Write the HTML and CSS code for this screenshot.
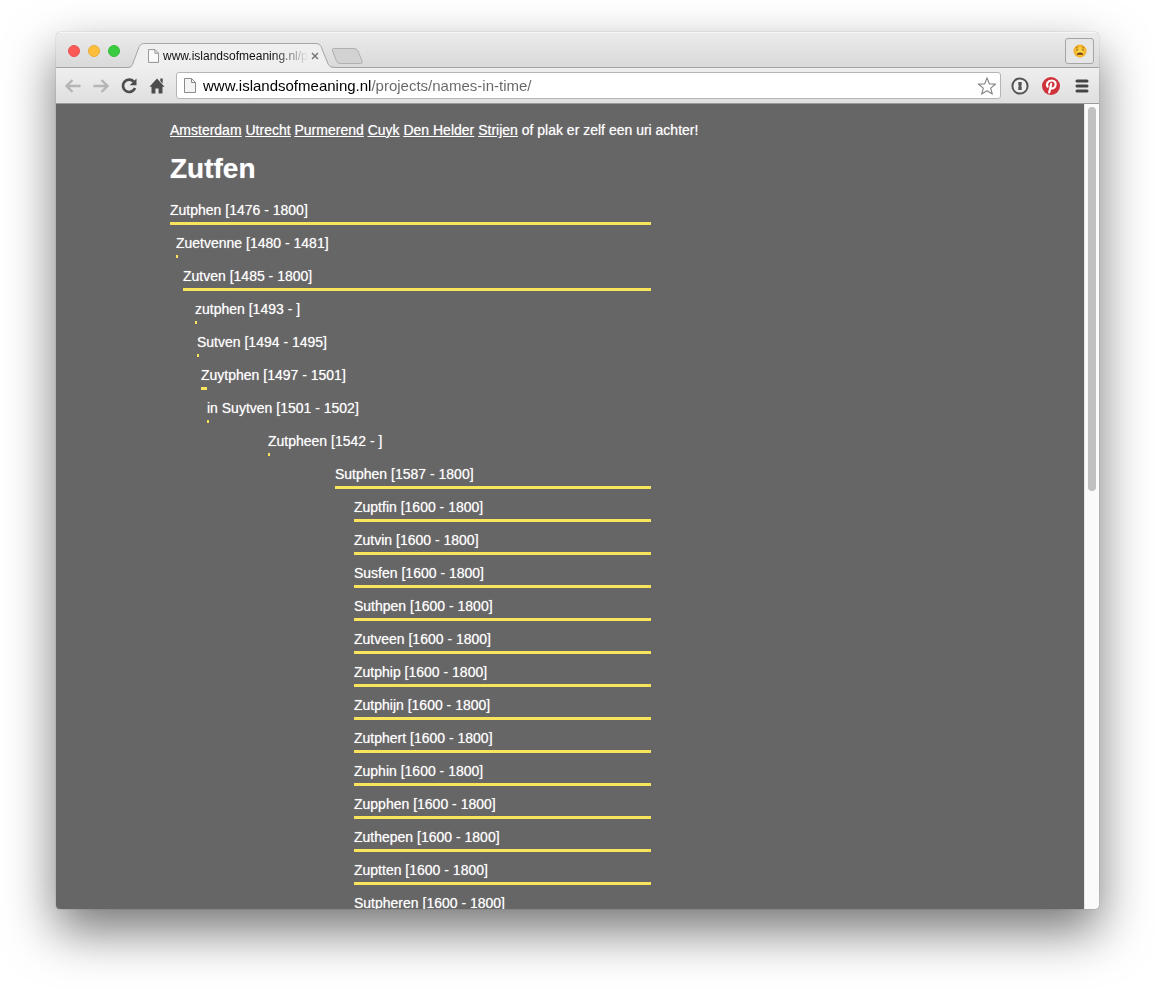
FILE: index.html
```html
<!DOCTYPE html>
<html lang="nl">
<head>
<meta charset="utf-8">
<title>Zutfen</title>
<link rel="stylesheet" href="styles.css">
</head>
<body>
<div class="window">
  <header class="tabstrip">
    <div class="lights">
      <button class="light close" aria-label="Close"></button>
      <button class="light minimise" aria-label="Minimise"></button>
      <button class="light expand" aria-label="Zoom"></button>
    </div>
    <div class="tab">
      <svg class="tab-shape" viewBox="0 0 210 26" preserveAspectRatio="none" aria-hidden="true"><path d="M0 25.500Q3.500 25.500 4.500 22.500L11.500 3.500Q13 .500 16 .500H191Q194.500.500 196 3.500L203.500 22.500Q205 25.500 210 25.500V26H0z" fill="#efefef"/><path d="M0 25.500Q3.500 25.500 4.500 22.500L11.500 3.500Q13 .500 16 .500H191Q194.500.500 196 3.500L203.500 22.500Q205 25.500 210 25.500" fill="none" stroke="#a2a2a2"/></svg>
      <svg class="page-icon small" viewBox="0 0 12 15" aria-hidden="true"><path d="M.500.500h7l4 4v10H.500z" fill="#fafafa" stroke="#8a8a8a"/><path d="M7.500.500v4h4" fill="none" stroke="#8a8a8a"/></svg>
      <span class="tab-title">www.islandsofmeaning.nl/p</span>
      <button class="tab-close" aria-label="Close tab"><svg viewBox="0 0 8 8"><path d="M1 1l6 6M7 1L1 7" stroke="#777" stroke-width="1.500"/></svg></button>
    </div>
    <button class="new-tab" aria-label="New tab"><svg viewBox="0 0 34 18"><path d="M3.500 1.500H24Q27 1.500 28 4L32 14Q33 16.500 30 16.500H10Q7.500 16.500 6.500 14L2.500 4Q1.500 1.500 3.500 1.500z" fill="#d2d2d2" stroke="#b0b0b0"/></svg></button>
    <button class="profile" aria-label="Profile"><svg viewBox="0 0 14 14"><defs><radialGradient id="face"><stop offset="0" stop-color="#ffe34f"/><stop offset="1" stop-color="#f3ac25"/></radialGradient></defs><circle cx="7" cy="7" r="6.500" fill="url(#face)"/><path d="M2.800 3.800L5 2.800M9 2.800l2.200 1M3.200 4.800l2 .9-2 .9M10.800 4.800l-2 .9 2 .9" fill="none" stroke="#8a5a20" stroke-width=".7"/><path d="M3.700 11Q4.200 8.600 7 8.600T10.300 11Q7 10 3.700 11z" fill="#63351a"/></svg></button>
  </header>
  <nav class="toolbar" aria-label="Browser">
    <button class="tool" aria-label="Back"><svg viewBox="0 0 18 18"><path d="M16.500 9H3M8.500 3L2.500 9l6 6" fill="none" stroke="#b5b5b5" stroke-width="2.400"/></svg></button>
    <button class="tool" aria-label="Forward"><svg viewBox="0 0 18 18"><path d="M1.500 9H15M9.500 3l6 6-6 6" fill="none" stroke="#b5b5b5" stroke-width="2.400"/></svg></button>
    <button class="tool" aria-label="Reload"><svg viewBox="0 0 18 18"><path d="M13.800 4.600A6.200 6.200 0 1 0 15 11" fill="none" stroke="#4d4d4d" stroke-width="2.700"/><path d="M16.500 1.500v6.800H9.700z" fill="#4d4d4d"/></svg></button>
    <button class="tool" aria-label="Home"><svg viewBox="0 0 18 18"><path d="M9 1.500l7.500 8.300H14.500V16.500H10.600V11.500H7.400v5H3.500V9.800H1.500zM12.300 1.500h2.400V6.500l-2.400-2.400z" fill="#4d4d4d"/></svg></button>
    <div class="address">
      <svg class="page-icon" viewBox="0 0 12 15" aria-hidden="true"><path d="M.500.500h7l4 4v10H.500z" fill="#f4f4f4" stroke="#8a8a8a"/><path d="M7.500.500v4h4" fill="none" stroke="#8a8a8a"/></svg>
      <input class="url" type="text" aria-label="Address" value="www.islandsofmeaning.nl/projects/names-in-time/">
      <button class="tool" aria-label="Bookmark"><svg viewBox="0 0 18 18"><path d="M9 .900l2.300 5.900 6.100.4-4.700 3.900 1.600 6L9 13.800l-5.300 3.300 1.600-6L.600 7.200l6.100-.4z" fill="#fff" stroke="#888" stroke-width="1.200" stroke-linejoin="round"/></svg></button>
    </div>
    <div class="extensions">
      <button class="tool" aria-label="Password manager"><svg viewBox="0 0 18 18"><circle cx="9" cy="9" r="7.600" fill="#eee" stroke="#555" stroke-width="2"/><path d="M7.300 5h3.400v3.300l-.7.800.7.700V13H7.300V9.700l.7-.8-.7-.7z" fill="#555"/></svg></button>
      <button class="tool" aria-label="Pinterest"><svg viewBox="0 0 18 18"><circle cx="9" cy="9" r="9" fill="#d0323c"/><path d="M5.600 9.600C4 7 5.800 3.500 9.500 3.500c3.200 0 4.800 2.300 4 5-.7 2.900-3.800 3.800-4.900 2M9.200 6.900L7.200 15.500" fill="none" stroke="#fff" stroke-width="2.200" stroke-linecap="round"/></svg></button>
      <button class="tool" aria-label="Menu"><svg viewBox="0 0 18 18"><path d="M4 4h10M4 9h10M4 14h10" stroke="#444" stroke-width="3" stroke-linecap="round"/></svg></button>
    </div>
  </nav>
  <div class="viewport">
    <main class="page">
      <div class="content">
        <p class="intro"><a href="#amsterdam">Amsterdam</a> <a href="#utrecht">Utrecht</a> <a href="#purmerend">Purmerend</a> <a href="#cuyk">Cuyk</a> <a href="#denhelder">Den Helder</a> <a href="#strijen">Strijen</a> of plak er zelf een uri achter!</p>
        <h1 class="place">Zutfen</h1>
        <ul class="names">
          <li class="name" style="margin-left:0px">Zutphen [1476 - 1800]<span class="span" style="width:481px"></span></li>
          <li class="name" style="margin-left:6px">Zuetvenne [1480 - 1481]<span class="span" style="width:2px"></span></li>
          <li class="name" style="margin-left:13px">Zutven [1485 - 1800]<span class="span" style="width:468px"></span></li>
          <li class="name" style="margin-left:25px">zutphen [1493 - ]<span class="span" style="width:2px"></span></li>
          <li class="name" style="margin-left:27px">Sutven [1494 - 1495]<span class="span" style="width:2px"></span></li>
          <li class="name" style="margin-left:31px">Zuytphen [1497 - 1501]<span class="span" style="width:6px"></span></li>
          <li class="name" style="margin-left:37px">in Suytven [1501 - 1502]<span class="span" style="width:2px"></span></li>
          <li class="name" style="margin-left:98px">Zutpheen [1542 - ]<span class="span" style="width:2px"></span></li>
          <li class="name" style="margin-left:165px">Sutphen [1587 - 1800]<span class="span" style="width:316px"></span></li>
          <li class="name" style="margin-left:184px">Zuptfin [1600 - 1800]<span class="span" style="width:297px"></span></li>
          <li class="name" style="margin-left:184px">Zutvin [1600 - 1800]<span class="span" style="width:297px"></span></li>
          <li class="name" style="margin-left:184px">Susfen [1600 - 1800]<span class="span" style="width:297px"></span></li>
          <li class="name" style="margin-left:184px">Suthpen [1600 - 1800]<span class="span" style="width:297px"></span></li>
          <li class="name" style="margin-left:184px">Zutveen [1600 - 1800]<span class="span" style="width:297px"></span></li>
          <li class="name" style="margin-left:184px">Zutphip [1600 - 1800]<span class="span" style="width:297px"></span></li>
          <li class="name" style="margin-left:184px">Zutphijn [1600 - 1800]<span class="span" style="width:297px"></span></li>
          <li class="name" style="margin-left:184px">Zutphert [1600 - 1800]<span class="span" style="width:297px"></span></li>
          <li class="name" style="margin-left:184px">Zuphin [1600 - 1800]<span class="span" style="width:297px"></span></li>
          <li class="name" style="margin-left:184px">Zupphen [1600 - 1800]<span class="span" style="width:297px"></span></li>
          <li class="name" style="margin-left:184px">Zuthepen [1600 - 1800]<span class="span" style="width:297px"></span></li>
          <li class="name" style="margin-left:184px">Zuptten [1600 - 1800]<span class="span" style="width:297px"></span></li>
          <li class="name" style="margin-left:184px">Sutpheren [1600 - 1800]<span class="span" style="width:297px"></span></li>
        </ul>
      </div>
    </main>
    <div class="scrollbar"><div class="thumb"></div></div>
  </div>
</div>
</body>
</html>
```
FILE: styles.css
```css
* { box-sizing: border-box; }

body {
  margin: 0;
  background: #fff;
  font-family: "Liberation Sans", Arial, sans-serif;
  height: 100vh;
  padding: 32px 56px 80px;
  overflow: hidden;
}

button {
  border: 0;
  padding: 0;
  background: none;
  flex: none;
}

svg { display: block; }

.window {
  height: 100%;
  display: flex;
  flex-direction: column;
  border-radius: 5px 5px 4px 4px;
  overflow: hidden;
  box-shadow: 0 0 1px rgba(0, 0, 0, .5), 0 22px 50px rgba(0, 0, 0, .54);
}

.tabstrip {
  height: 36px;
  flex: none;
  display: flex;
  align-items: flex-end;
  padding: 0 5px 0 12px;
  background: linear-gradient(#ebebeb, #d9d9d9);
  border-top: 1px solid #f7f7f7;
  box-shadow: inset 0 -1px #a2a2a2;
}

.lights {
  display: flex;
  gap: 8px;
  padding-bottom: 11px;
}

.light {
  width: 12px;
  height: 12px;
  border-radius: 50%;
}

.close { background: #fb5a57; border: 1px solid #ea5350; }
.minimise { background: #fcbe3b; border: 1px solid #e8ad38; }
.expand { background: #3bcb40; border: 1px solid #36bd3a; }

.tab {
  position: relative;
  height: 25px;
  margin-left: 8px;
  padding: 0 16px 0 20px;
  display: flex;
  align-items: center;
}

.tab-shape {
  position: absolute;
  inset: 0;
  width: 100%;
  height: 100%;
}

.page-icon {
  position: relative;
  width: 12px;
  height: 15px;
  flex: none;
}

.small {
  width: 11px;
  height: 14px;
}

.tab-title {
  position: relative;
  margin-left: 4px;
  font-size: 12px;
  line-height: 16px;
  color: #111;
  white-space: nowrap;
  -webkit-mask-image: linear-gradient(to right, #000 110px, transparent 146px);
  mask-image: linear-gradient(to right, #000 110px, transparent 146px);
}

.tab-close {
  position: relative;
  width: 8px;
  height: 8px;
  margin-left: 3px;
}

.new-tab {
  width: 34px;
  height: 18px;
  margin: 0 auto 3px -5px;
}

.profile {
  width: 29px;
  height: 26px;
  margin-bottom: 4px;
  display: flex;
  align-items: center;
  justify-content: center;
  border: 1px solid #a5a5a5;
  border-radius: 3px;
  background: #e6e6e6;
}

.profile svg { width: 14px; height: 14px; }

.toolbar {
  height: 36px;
  flex: none;
  display: flex;
  align-items: center;
  gap: 10px;
  padding: 0 8px;
  background: linear-gradient(#efefef, #dfdfdf);
  border-bottom: 1px solid #999;
}

.tool {
  width: 18px;
  height: 18px;
}

.extensions {
  display: flex;
  gap: 13px;
}

.address {
  flex: 1;
  height: 27px;
  display: flex;
  align-items: center;
  padding: 0 4px 0 7px;
  background: #fff;
  border: 1px solid #b5b5b5;
  border-radius: 3px;
}

.url {
  flex: 1;
  min-width: 0;
  margin-left: 7px;
  padding: 0;
  border: 0;
  outline: 0;
  font: 15px/20px "Liberation Sans", Arial, sans-serif;
  color: #222;
  background: linear-gradient(to right, #000 168px, #666 168px);
  -webkit-background-clip: text;
  background-clip: text;
  -webkit-text-fill-color: transparent;
}

.viewport {
  flex: 1;
  min-height: 0;
  display: flex;
  background: #666;
}

.page {
  flex: 1;
  min-width: 0;
  overflow: hidden;
}

.content {
  max-width: 800px;
  margin: 0 auto;
  padding-top: 18px;
  color: #fff;
  font-size: 14px;
  line-height: 16px;
  text-shadow: 0 0 1px rgba(255, 255, 255, .6);
}

.intro { margin: 0; }

.intro a {
  color: #fff;
  text-underline-offset: 1px;
}

.place {
  margin: 15px 0 17px;
  font-size: 28px;
  line-height: 32px;
}

.names {
  list-style: none;
  margin: 0;
  padding: 0;
}

.name {
  padding-bottom: 10px;
  white-space: nowrap;
}

.span {
  display: block;
  height: 3px;
  margin-top: 4px;
  background: #f9e45b;
}

.scrollbar {
  width: 15px;
  flex: none;
  padding: 3px;
  background: #fafafa;
  border-left: 1px solid #e6e6e6;
}

.thumb {
  width: 8px;
  height: 48%;
  border-radius: 4px;
  background: #c1c1c1;
}
```
